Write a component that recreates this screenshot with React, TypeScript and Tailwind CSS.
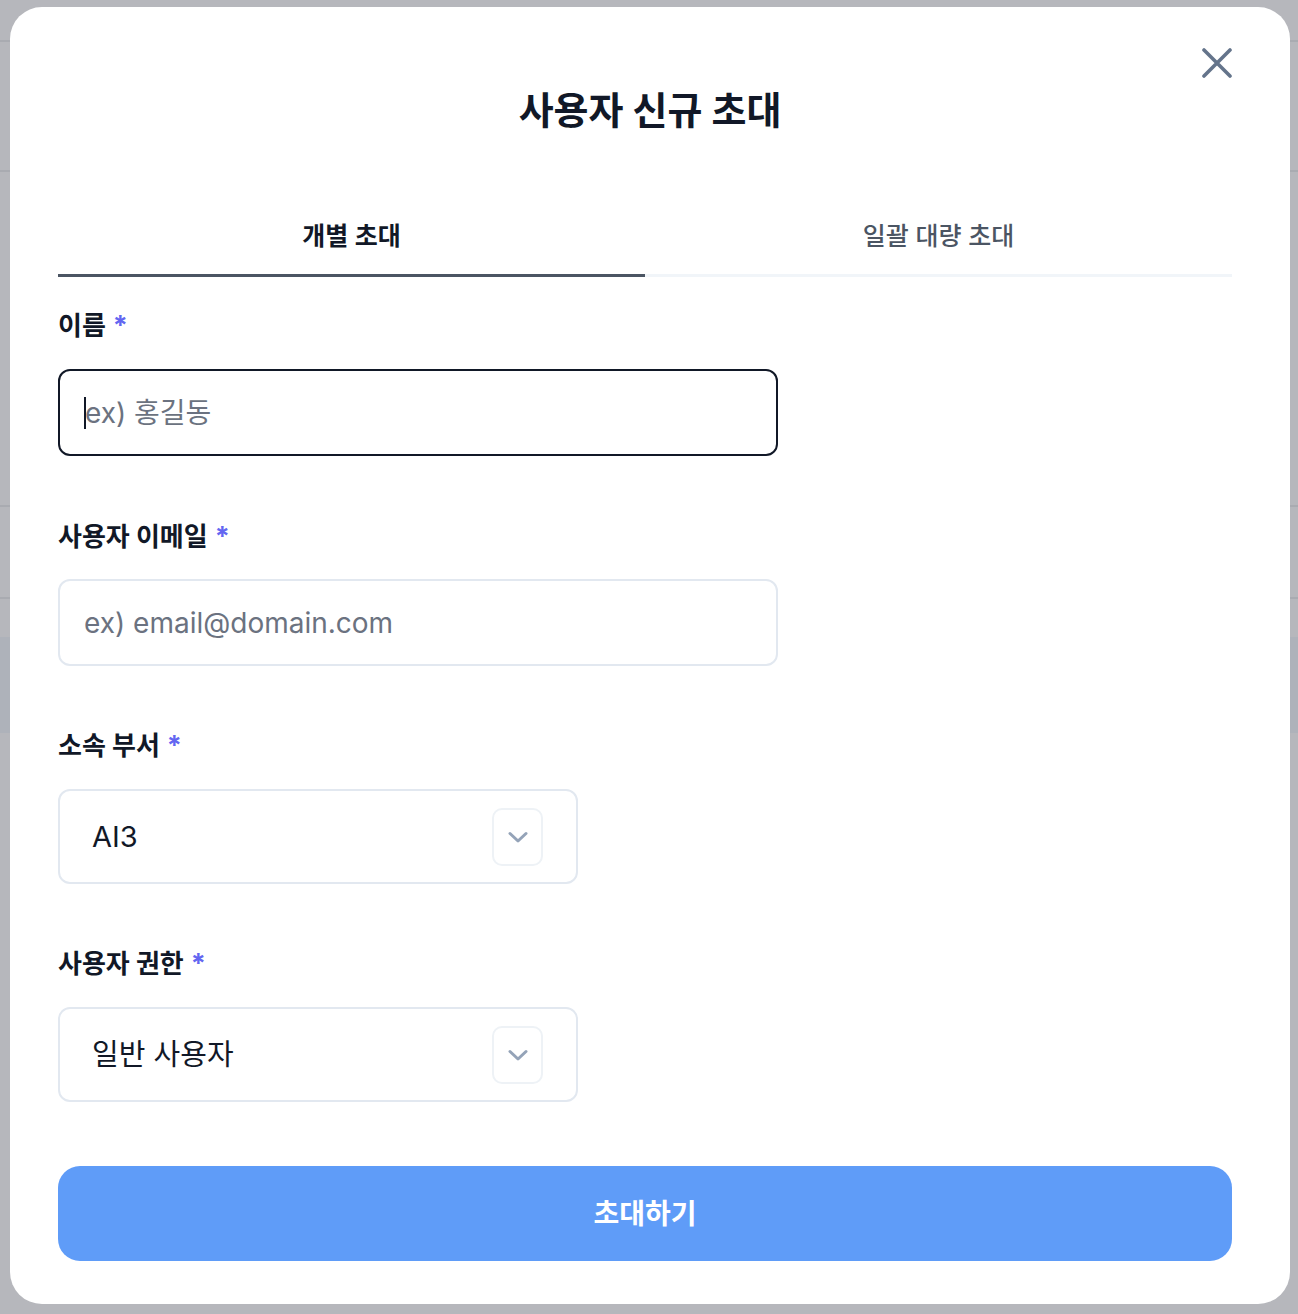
import React from "react";

const font = { fontFamily: '"Inter", "Noto Sans CJK KR", sans-serif' };

function Label({ text }: { text: string }) {
  return (
    <div className="flex items-center h-[32px] text-[26px] font-bold text-[#111827] leading-none">
      <span>{text}</span>
      <span className="ml-[7px] text-[#6366f1] text-[27px] font-bold -mt-[2px]">*</span>
    </div>
  );
}

function Chevron() {
  return (
    <svg width="22" height="14" viewBox="0 0 22 14" fill="none">
      <path d="M3 3.5 L11 11 L19 3.5" stroke="#94a3b8" strokeWidth="3" strokeLinecap="round" strokeLinejoin="round" />
    </svg>
  );
}

function Select({ value }: { value: string }) {
  return (
    <div className="mt-[27px] w-[520px] h-[95px] rounded-[12px] border-2 border-[#e2e8f0] bg-white flex items-center justify-between pl-[32px] pr-[33px]">
      <span className="text-[29px] text-[#111827] leading-none">{value}</span>
      <div className="w-[51px] h-[58px] rounded-[10px] border-2 border-[#eef2f6] flex items-center justify-center">
        <Chevron />
      </div>
    </div>
  );
}

export default function App() {
  return (
    <div className="relative w-[1298px] h-[1314px] overflow-hidden bg-[#b6b7bc]" style={font}>
      {/* dimmed page behind */}
      <div className="flex flex-col">
        <div className="h-[42px] border-b-2 border-[#a9abb1]" />
        <div className="h-[130px] border-b-2 border-[#a9abb1]" />
        <div className="h-[335px] border-b-2 border-[#a9abb1]" />
        <div className="h-[92px] border-b-2 border-[#a9abb1]" />
        <div className="mt-[38px] h-[96px] bg-[#aeb2ba]" />
      </div>

      {/* modal */}
      <div className="absolute left-[10px] top-[7px] w-[1280px] h-[1297px] bg-white rounded-[32px] pl-[48px] pr-[58px] flex flex-col">
        <button className="absolute right-[58px] top-[41px] w-[30px] h-[30px] flex items-center justify-center">
          <svg width="30" height="30" viewBox="0 0 30 30" fill="none">
            <path d="M2 2 L28 28 M28 2 L2 28" stroke="#64748b" strokeWidth="3.6" strokeLinecap="round" />
          </svg>
        </button>

        <h1 className="mt-[80px] h-[46px] flex items-center justify-center text-[38px] font-bold text-[#111827] leading-none pl-[10px]">
          사용자 신규 초대
        </h1>

        <div className="mt-[66px] flex">
          <div className="flex-1 h-[78px] border-b-[3px] border-[#4b5563] flex items-center justify-center text-[25px] font-semibold text-[#111827]">
            개별 초대
          </div>
          <div className="flex-1 h-[78px] border-b-[3px] border-[#f1f5f9] flex items-center justify-center text-[25px] font-medium text-[#4b5563]">
            일괄 대량 초대
          </div>
        </div>

        <div className="mt-[33px]">
          <Label text="이름" />
          <div className="mt-[27px] w-[720px] h-[87px] rounded-[12px] border-2 border-[#111827] flex items-center pl-[24px]">
            <span className="w-[2px] h-[32px] bg-[#111827]" />
            <span className="text-[28px] text-[#6b7280] leading-none -ml-[1px]">ex) 홍길동</span>
          </div>
        </div>

        <div className="mt-[65px]">
          <Label text="사용자 이메일" />
          <div className="mt-[26px] w-[720px] h-[87px] rounded-[12px] border-2 border-[#e2e8f0] flex items-center pl-[24px]">
            <span className="text-[28px] text-[#6b7280] leading-none">ex) email@domain.com</span>
          </div>
        </div>

        <div className="mt-[64px]">
          <Label text="소속 부서" />
          <Select value="AI3" />
        </div>

        <div className="mt-[64px]">
          <Label text="사용자 권한" />
          <Select value="일반 사용자" />
        </div>

        <button className="mt-[64px] w-full h-[95px] rounded-[22px] bg-[#5f9cf8] text-white text-[28px] font-bold flex items-center justify-center">
          초대하기
        </button>
      </div>
    </div>
  );
}
